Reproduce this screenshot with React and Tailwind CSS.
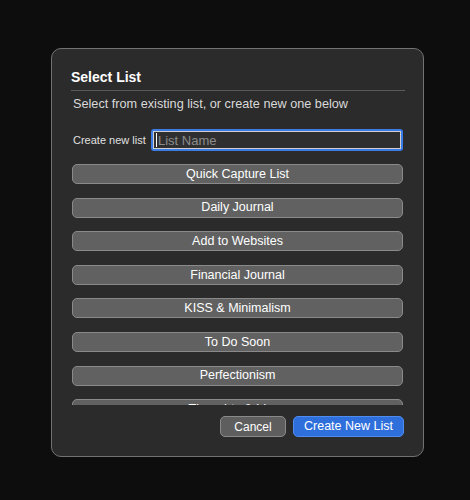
import React from 'react';

const lists = [
  'Quick Capture List',
  'Daily Journal',
  'Add to Websites',
  'Financial Journal',
  'KISS & Minimalism',
  'To Do Soon',
  'Perfectionism',
  'Thoughts & Ideas',
];

export default function App() {
  return (
    <div className="w-[470px] h-[500px] bg-[#0d0d0d] pt-[48px] pl-[51px] font-['Liberation_Sans',Arial,sans-serif]">
      <div className="w-[373px] h-[409px] rounded-[10px] border border-[#727272] bg-[#2b2b2b] pl-[19px] pr-[18px] pt-[19px] flex flex-col">
        {/* header */}
        <div className="border-b border-[#5a5a5a] pb-[4px]">
          <h1 className="text-[14px] leading-[18px] font-bold text-white">Select List</h1>
        </div>
        <p className="mt-[5px] pl-[2px] text-[12.7px] leading-[16px] text-[#d9d9d9]">
          Select from existing list, or create new one below
        </p>

        {/* new list input */}
        <div className="mt-[17px] flex items-center pl-[2px] pr-[2px]">
          <label className="text-[11px] text-[#e0e0e0] w-[78px] shrink-0">Create new list</label>
          <div className="flex-1 h-[22px] rounded-[3px] bg-[#3a7be6] p-[2px]">
            <div className="h-full border border-[#cfcfcf] bg-[#2f2f2f] flex items-center pl-[2px]">
              <span className="w-px h-[14px] bg-white" />
              <span className="ml-[1px] text-[13px] leading-none text-[#8c8c8c]">List Name</span>
            </div>
          </div>
        </div>

        {/* existing lists */}
        <div className="mt-[11px] h-[243px] overflow-hidden pt-[2px] pl-[1px] pr-[2px] flex flex-col gap-[13.6px]">
          {lists.map((name) => (
            <button
              key={name}
              className="h-[20px] shrink-0 w-full rounded-[5px] border border-[#8a8a8a] bg-[#616161] text-[12.5px] leading-none text-white"
            >
              {name}
            </button>
          ))}
        </div>

        {/* footer */}
        <div className="mt-[11px] flex justify-end gap-[7px] pr-[1px]">
          <button className="h-[21px] w-[66px] rounded-[5px] border border-[#8a8a8a] bg-[#5e5e5e] text-[12px] leading-none text-white">
            Cancel
          </button>
          <button className="h-[21px] w-[111px] rounded-[5px] border border-[#4f8cf0] bg-[#2f6fdc] text-[12.5px] leading-none text-white">
            Create New List
          </button>
        </div>
      </div>
    </div>
  );
}
